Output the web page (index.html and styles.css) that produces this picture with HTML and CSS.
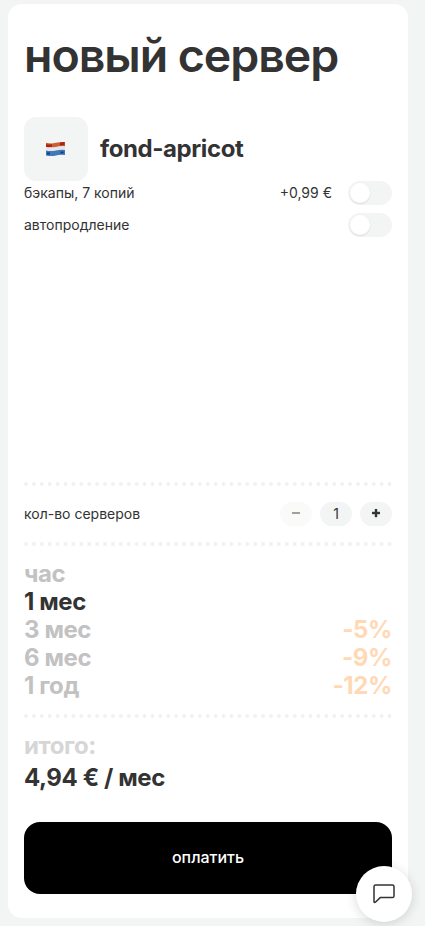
FILE: index.html
```html
<!DOCTYPE html>
<html lang="ru">
<head>
<meta charset="utf-8">
<title>новый сервер</title>
<link rel="stylesheet" href="styles.css">
</head>
<body>
<main class="card">
  <h1 class="title"><span>новый сервер</span></h1>
  <div class="server">
    <div class="flag">
      <svg width="22" height="18" viewBox="0 0 22 18">
        <path d="M1 2.800Q6 4 11 2.800T20 2V6.400Q15 6 11 7T1 7Z" fill="#c9602f"/>
        <path d="M1 4.200Q4 5 7 4.200V6.800Q4 7.600 1 7ZM15 2.500L19.500 2V5L15 5.400Z" fill="#a9221b"/>
        <path d="M1 7Q6 8 11 7T20 6.400V10.400Q15 10 11 11T1 11Z" fill="#e3e7ec"/>
        <path d="M1 10.500Q6 11.500 11 10.500T20 10V15Q15 14.400 11 15.400T1 15.400Z" fill="#4277b8"/>
        <path d="M2 12.500H5V14.500H2ZM15.500 11.500H18.500V13.500H15.500Z" fill="#123d91"/>
      </svg>
    </div>
    <h2 class="name">fond-apricot</h2>
  </div>
  <div class="option">
    <span>бэкапы, 7 копий</span>
    <span class="price">+0,99 €</span>
    <span class="switch"></span>
  </div>
  <div class="option">
    <span>автопродление</span>
    <span class="switch"></span>
  </div>
  <div class="order">
    <hr class="dots">
    <div class="count">
      <span class="count-label">кол-во серверов</span>
      <button class="pill pill-off"><svg width="8" height="10" viewBox="0 0 8 10"><path d="M0 3h8v2H0z" fill="#a0a0a0"/></svg></button>
      <span class="pill">1</span>
      <button class="pill"><svg width="8" height="10" viewBox="0 0 8 10"><path d="M0 3h3V0h2v3h3v2H5v3H3V5H0z" fill="#333" stroke="#333" stroke-width=".4"/></svg></button>
    </div>
    <hr class="dots">
    <ul class="periods">
      <li>час</li>
      <li class="active">1 мес</li>
      <li>3 мес <b>-5%</b></li>
      <li>6 мес <b>-9%</b></li>
      <li>1 год <b>-12%</b></li>
    </ul>
    <hr class="dots">
    <div class="total-label">итого:</div>
    <div class="total">4,94 € / мес</div>
    <button class="pay">оплатить</button>
  </div>
</main>
<button class="chat" aria-label="чат">
  <svg width="24" height="22" viewBox="0 0 24 22" fill="none" stroke="#333" stroke-width="1.500" stroke-linejoin="round"><path d="M3.600 2H20.400Q22 2 22 3.600V13Q22 14.600 20.400 14.600H8.200L3.400 19.200Q2 20 2 18.400V3.600Q2 2 3.600 2Z"/></svg>
</button>
</body>
</html>
```
FILE: styles.css
```css
* { box-sizing: border-box; }
html, body { height: 100%; }
body {
  margin: 0;
  padding: 4px 17px 8px 8px;
  background: #f3f5f5;
  color: #333;
  font: 14px/24px Inter, sans-serif;
  overflow: hidden;
}
button { border: 0; padding: 0; font: inherit; color: inherit; }
.card {
  display: flex;
  flex-direction: column;
  height: 914px;
  padding: 24px 16px;
  border-radius: 14px;
  background: #fff;
}
.title { margin: 0 0 35px; font-size: 46.5px; line-height: 54px; font-weight: 600; letter-spacing: -1.05px; white-space: nowrap; }
.server { display: flex; align-items: center; gap: 12px; }
.flag {
  display: flex;
  align-items: center;
  justify-content: center;
  width: 64px;
  height: 64px;
  border-radius: 12px;
  background: #f3f5f5;
}
.name { margin: 0; font-size: 24px; line-height: 28px; font-weight: 700; letter-spacing: -0.4px; }
.option { display: flex; height: 24px; margin-bottom: 8px; }
.price { margin-left: auto; }
.switch { width: 44px; height: 24px; padding: 2px; margin-left: auto; border-radius: 12px; background: #f3f5f5; }
.price + .switch { margin-left: 16px; }
.switch::before {
  content: "";
  display: block;
  width: 20px;
  height: 20px;
  border-radius: 50%;
  background: #fff;
  box-shadow: 0 1px 2px rgba(0, 0, 0, .1);
}
.order { margin-top: auto; }
.dots { height: 0; margin: 0; border: 0; border-top: 4px dotted #f1f1f1; }
.count { display: flex; align-items: center; gap: 8px; height: 56px; }
.count-label { flex: 1; }
.pill {
  display: flex;
  align-items: center;
  justify-content: center;
  width: 32px;
  height: 24px;
  border-radius: 12px;
  background: #f3f5f5;
}
.pill-off { background: #fafaf9; }
.periods {
  margin: 14px 0;
  padding: 0;
  list-style: none;
  font-size: 24px;
  line-height: 28px;
  font-weight: 700;
  letter-spacing: -0.4px;
  color: #c2c2c2;
}
.periods li { display: flex; justify-content: space-between; }
.periods .active { color: #333; }
.periods b { font-weight: 700; color: #ffd9b5; }
.total-label, .total { font-size: 24px; line-height: 32px; font-weight: 700; letter-spacing: -0.4px; }
.total-label { margin-top: 12px; color: #d6d6d6; }
.pay {
  display: block;
  width: 100%;
  height: 72px;
  margin-top: 28px;
  padding-bottom: 2px;
  border-radius: 16px;
  background: #000;
  color: #fff;
  font-size: 16px;
  font-weight: 500;
}
.chat {
  position: fixed;
  left: 356px;
  top: 866px;
  display: flex;
  align-items: center;
  justify-content: center;
  width: 56px;
  height: 56px;
  border-radius: 50%;
  background: #fff;
  box-shadow: 0 2px 12px rgba(0, 0, 0, .15);
}
```
